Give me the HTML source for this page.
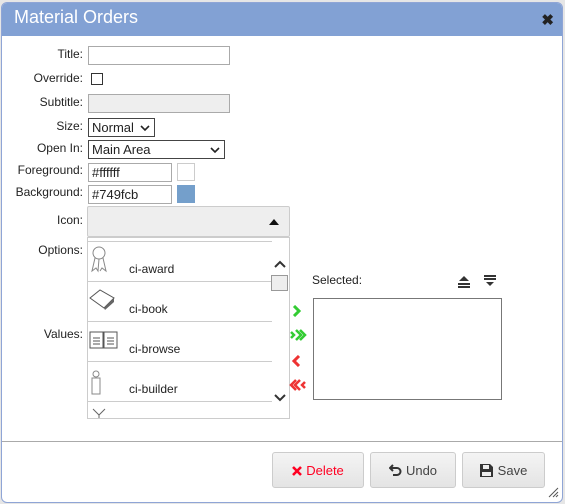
<!DOCTYPE html>
<html><head><style>
*{box-sizing:border-box}
body{margin:0;width:565px;height:504px;background:#e6e6e6;font-family:"Liberation Sans",Arial,sans-serif;font-size:12px;color:#222;position:relative;overflow:hidden}
.dlg{position:absolute;left:1px;top:2px;width:562px;height:501px;background:#fff;border:1px solid #8fa5d6;border-radius:6px;overflow:hidden}
.hdr{position:absolute;left:0;top:0;right:0;height:33px;background:#82a1d4;color:#fff;font-size:18px;padding:4px 0 0 12px}
.x{position:absolute;right:8px;top:8px;font-size:15px;color:#222;font-weight:bold}
.w{position:absolute;left:-1px;top:-2px;width:562px;height:501px}
.lbl{position:absolute;right:480px;text-align:right;font-size:12px}
.a{position:absolute}
.inp{position:absolute;border:1px solid #aaa;background:#fff;height:19px;font-size:13px;padding:1px 3px}
.sel{position:absolute;border:1px solid #444;background:#fff;height:19px;font-size:13px;padding:1px 3px}
.item{position:absolute;left:0;width:184px;height:40px;border-bottom:1px solid #ccc}
.item span{position:absolute;left:41px;top:22px;font-size:12px}
.btn{position:absolute;top:451px;height:36px;border:1px solid #ccc;border-radius:3px;background:linear-gradient(#f4f4f4,#e4e4e4);font-size:13px;color:#444;padding-top:10px;text-align:center}
</style></head><body>
<div class="dlg">
<div class="hdr">Material Orders<span class="x">✖</span></div>
<div class="w">
<div class="lbl" style="top:46px">Title:</div>
<div class="inp" style="left:87px;top:45px;width:142px"></div>
<div class="lbl" style="top:70px">Override:</div>
<div class="a" style="left:90px;top:72px;width:12px;height:12px;border:1px solid #333"></div>
<div class="lbl" style="top:94px">Subtitle:</div>
<div class="inp" style="left:87px;top:93px;width:142px;background:#eee"></div>
<div class="lbl" style="top:118px">Size:</div>
<div class="sel" style="left:87px;top:117px;width:67px">Normal <svg style="position:absolute;right:4px;top:6px" width="10" height="7"><path d="M1 1l4 4 4-4" fill="none" stroke="#222" stroke-width="1.6"/></svg></div>
<div class="lbl" style="top:140px">Open In:</div>
<div class="sel" style="left:87px;top:139px;width:137px">Main Area <svg style="position:absolute;right:4px;top:6px" width="10" height="7"><path d="M1 1l4 4 4-4" fill="none" stroke="#222" stroke-width="1.6"/></svg></div>
<div class="lbl" style="top:162px">Foreground:</div>
<div class="inp" style="left:87px;top:162px;width:84px">#ffffff</div>
<div class="a" style="left:176px;top:162px;width:18px;height:18px;border:1px solid #ccc"></div>
<div class="lbl" style="top:184px">Background:</div>
<div class="inp" style="left:87px;top:184px;width:84px">#749fcb</div>
<div class="a" style="left:176px;top:184px;width:18px;height:18px;background:#749fcb"></div>
<div class="lbl" style="top:212px">Icon:</div>
<div class="a" style="left:86px;top:205px;width:203px;height:31px;background:#eee;border:1px solid #ccc;border-radius:2px"><svg style="position:absolute;right:10px;top:12px" width="10" height="6"><path d="M0 6L5 0 10 6Z" fill="#111"/></svg></div>
<div class="lbl" style="top:242px">Options:</div>
<div class="lbl" style="top:326px">Values:</div>
<div class="a" style="left:86px;top:236px;width:203px;height:182px;border:1px solid #ccc;overflow:hidden;background:#fff">
 <div class="item" style="top:-36px;height:40px"></div>
 <div class="item" style="top:4px"><span style="top:20px">ci-award</span><svg class="a" style="left:2px;top:3px" width="18" height="28"><circle cx="9" cy="8" r="6" fill="none" stroke="#888"/><path d="M5 13 L2 26 L6 23 L8 26 L9 14 M13 13 L16 26 L12 23 L10 26" fill="none" stroke="#888"/></svg></div>
 <div class="item" style="top:44px"><span style="top:20px">ci-book</span><svg class="a" style="left:0;top:4px" width="28" height="26"><path d="M2 12 L12 4 L26 12 L16 22 Z" fill="none" stroke="#555"/><path d="M16 22 L26 12 L26 16 L17 24 Z" fill="#666"/></svg></div>
 <div class="item" style="top:84px"><span style="top:20px">ci-browse</span><svg class="a" style="left:1px;top:9px" width="30" height="20"><rect x="1" y="1" width="13" height="16" fill="none" stroke="#555"/><rect x="15" y="1" width="13" height="16" fill="none" stroke="#555"/><path d="M4 7h7M4 10h7M4 13h7M18 7h7M18 10h7M18 13h7" stroke="#555"/></svg></div>
 <div class="item" style="top:124px"><span style="top:20px">ci-builder</span><svg class="a" style="left:2px;top:6px" width="14" height="28"><circle cx="6" cy="6" r="3" fill="none" stroke="#888"/><rect x="2" y="10" width="8" height="16" fill="none" stroke="#888"/></svg></div>
 <svg class="a" style="left:4px;top:170px" width="14" height="12"><path d="M1 1l6 6 6-6M7 7v4" fill="none" stroke="#666"/></svg>
 <svg class="a" style="left:186px;top:22px" width="12" height="8"><path d="M1 7l5-5 5 5" fill="none" stroke="#333" stroke-width="2"/></svg>
 <div class="a" style="left:183px;top:37px;width:17px;height:16px;background:#eee;border:1px solid #999"></div>
 <svg class="a" style="left:186px;top:156px" width="12" height="8"><path d="M1 1l5 5 5-5" fill="none" stroke="#333" stroke-width="2"/></svg>
</div>
<svg class="a" style="left:290px;top:304px" width="16" height="12"><path d="M3 1l5 5-5 5" fill="none" stroke="#3c3" stroke-width="3"/></svg>
<svg class="a" style="left:288px;top:328px" width="18" height="12"><path d="M2 3l3 3-3 3M7 1l5 5-5 5M11 1l5 5-5 5" fill="none" stroke="#3c3" stroke-width="2.5"/></svg>
<svg class="a" style="left:290px;top:354px" width="16" height="12"><path d="M8 1l-5 5 5 5" fill="none" stroke="#e33" stroke-width="3"/></svg>
<svg class="a" style="left:288px;top:378px" width="18" height="12"><path d="M7 1l-5 5 5 5M11 1l-5 5 5 5M16 3l-3 3 3 3" fill="none" stroke="#e33" stroke-width="2.5"/></svg>
<div class="a" style="left:311px;top:272px">Selected:</div>
<svg class="a" style="left:456px;top:274px" width="14" height="13"><path d="M7 1L12 6H2Z" fill="#333"/><rect x="1" y="8" width="12" height="2" fill="#333"/><rect x="1" y="11" width="12" height="2" fill="#333"/></svg>
<svg class="a" style="left:482px;top:274px" width="14" height="13"><rect x="1" y="0" width="12" height="2" fill="#333"/><rect x="1" y="3" width="12" height="2" fill="#333"/><path d="M3 7h8l-4 4Z" fill="#333"/></svg>
<div class="a" style="left:312px;top:297px;width:189px;height:102px;border:1px solid #777"></div>
<div class="a" style="left:0;right:0;top:440px;border-top:1px solid #aaa"></div>
<div class="btn" style="left:271px;width:92px;color:#f02"><svg width="10" height="10" style="vertical-align:-1px;margin-right:4px"><path d="M1 1l8 8M9 1l-8 8" stroke="#f02" stroke-width="2.6"/></svg>Delete</div>
<div class="btn" style="left:369px;width:86px"><svg width="13" height="12" style="vertical-align:-1px;margin-right:4px"><path d="M4 1L1 4l3 3" fill="none" stroke="#333" stroke-width="2"/><path d="M1 4h7a3.5 3.5 0 0 1 0 7H4" fill="none" stroke="#333" stroke-width="2"/></svg>Undo</div>
<div class="btn" style="left:461px;width:83px"><svg width="13" height="13" style="vertical-align:-2px;margin-right:5px"><path d="M0 0h10l3 3v10H0Z" fill="#333"/><rect x="3" y="1" width="6" height="4" fill="#eee"/><rect x="2" y="8" width="9" height="4" fill="#eee"/></svg>Save</div>
<svg class="a" style="left:546px;top:485px" width="12" height="12"><path d="M11 2L2 11M11 6L6 11M11 9L9 11" stroke="#555"/></svg>
</div>
</div>
</body></html>
